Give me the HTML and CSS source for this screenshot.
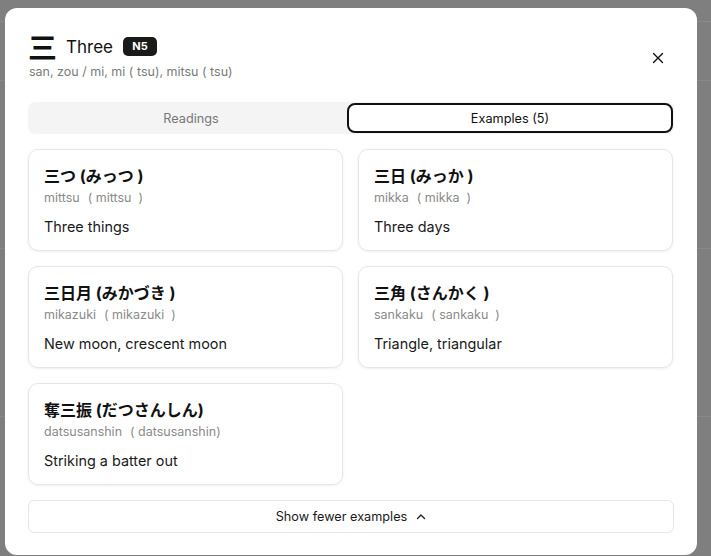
FILE: index.html
```html
<!DOCTYPE html>
<html lang="en">
<head>
<meta charset="utf-8">
<title>Three</title>
<link rel="stylesheet" href="styles.css">
</head>
<body>
<div class="page">
  <div class="page-top"></div>
  <div class="page-row r1"></div>
  <div class="page-row r2"></div>
  <div class="page-row r3"></div>
</div>
<div class="overlay">
  <div class="modal">
    <div class="header">
      <div class="head-main">
        <div class="title-row">
          <span class="kanji">三</span>
          <span class="meaning">Three</span>
          <span class="badge">N5</span>
        </div>
        <div class="readings">san, zou / mi, mi ( tsu), mitsu ( tsu)</div>
      </div>
      <button class="close" aria-label="Close">
        <svg width="12" height="12" viewBox="0 0 12 12"><path d="M1.5 1.5 L10.5 10.5 M10.5 1.5 L1.5 10.5" stroke="#111" stroke-width="1.4" stroke-linecap="round" fill="none"/></svg>
      </button>
    </div>
    <div class="tabs">
      <div class="tab">Readings</div>
      <div class="tab active">Examples (5)</div>
    </div>
    <div class="cards">
      <div class="card">
        <div class="c-title">三つ (みっつ )</div>
        <div class="c-read">mittsu<span class="paren">( mittsu<span class="gap">)</span></span></div>
        <div class="c-mean">Three things</div>
      </div>
      <div class="card">
        <div class="c-title">三日 (みっか )</div>
        <div class="c-read">mikka<span class="paren">( mikka<span class="gap">)</span></span></div>
        <div class="c-mean">Three days</div>
      </div>
      <div class="card">
        <div class="c-title">三日月 (みかづき )</div>
        <div class="c-read">mikazuki<span class="paren">( mikazuki<span class="gap">)</span></span></div>
        <div class="c-mean">New moon, crescent moon</div>
      </div>
      <div class="card">
        <div class="c-title">三角 (さんかく )</div>
        <div class="c-read">sankaku<span class="paren">( sankaku<span class="gap">)</span></span></div>
        <div class="c-mean">Triangle, triangular</div>
      </div>
      <div class="card">
        <div class="c-title">奪三振 (だつさんしん)</div>
        <div class="c-read">datsusanshin<span class="paren">( datsusanshin)</span></div>
        <div class="c-mean">Striking a batter out</div>
      </div>
    </div>
    <button class="more">Show fewer examples
      <svg width="10" height="10" viewBox="0 0 10 10"><path d="M1.5 6.5 L5 3 L8.5 6.5" stroke="#222" stroke-width="1.4" fill="none" stroke-linecap="round" stroke-linejoin="round"/></svg>
    </button>
  </div>
</div>
</body>
</html>
```
FILE: styles.css
```css
html, body {
  margin: 0;
  padding: 0;
}
body {
  background: #7f7f7f;
  font-family: Inter, "Noto Sans CJK JP", sans-serif;
  width: 711px;
  height: 556px;
  overflow: hidden;
}
.page {
  display: flex;
  flex-direction: column;
}
.page-top {
  height: 21px;
  border-bottom: 1px solid #8a8a8a;
}
.page-row {
  border-bottom: 1px solid #888;
}
.r1 { height: 58px; }
.r2 { height: 167px; }
.r3 { height: 167px; }

.overlay {
  position: fixed;
  inset: 0;
}
.modal {
  position: absolute;
  left: 5px;
  top: 8px;
  width: 692px;
  height: 547px;
  box-sizing: border-box;
  background: #fff;
  border-radius: 12px;
  padding: 22px 23px 0 23px;
  display: flex;
  flex-direction: column;
}
.header {
  display: flex;
  align-items: center;
  justify-content: space-between;
}
.title-row {
  display: flex;
  align-items: center;
  height: 30px;
}
.kanji {
  font-family: "Noto Sans CJK JP", sans-serif;
  font-size: 29px;
  line-height: 30px;
  color: #111;
  font-weight: 700;
  margin-top: 1px;
}
.meaning {
  font-size: 17px;
  color: #111;
  margin-left: 9px;
  padding-top: 3px;
}
.badge {
  margin-left: 10px;
  background: #1a1a1a;
  color: #fff;
  font-size: 11px;
  font-weight: 700;
  height: 19px;
  line-height: 19px;
  width: 34px;
  text-align: center;
  border-radius: 5px;
  margin-top: 2px;
}
.readings {
  margin-top: 3px;
  font-size: 12.5px;
  color: #7a7a7a;
  line-height: 18px;
  padding-left: 1px;
}
.close {
  width: 28px;
  height: 28px;
  border: none;
  background: transparent;
  padding: 0;
  margin-right: 2px;
  margin-top: 4px;
  display: flex;
  align-items: center;
  justify-content: center;
}
.tabs {
  margin-top: 21px;
  background: #f4f4f4;
  border-radius: 7px;
  padding: 1px;
  display: flex;
  height: 32px;
  box-sizing: border-box;
}
.tab {
  display: flex;
  align-items: center;
  justify-content: center;
  font-size: 12.7px;
  color: #777;
}
.tab:first-child {
  flex: 1;
  padding-left: 6px;
}
.tab.active {
  width: 326px;
  box-sizing: border-box;
  background: #fff;
  border: 2px solid #111;
  border-radius: 8px;
  color: #111;
}
.cards {
  margin-top: 15px;
  display: grid;
  grid-template-columns: 315px 315px;
  column-gap: 15px;
  row-gap: 15px;
}
.card {
  border: 1px solid #e6e6e6;
  border-radius: 10px;
  box-shadow: 0 1px 3px rgba(0, 0, 0, 0.07);
  padding: 14px 15px 14px 15px;
  height: 102px;
  box-sizing: border-box;
}
.c-title {
  font-size: 16px;
  font-weight: 700;
  line-height: 24px;
  color: #111;
}
.c-read {
  font-size: 12.5px;
  line-height: 20px;
  color: #8a8a8a;
}
.paren {
  margin-left: 8px;
}
.gap {
  margin-left: 7px;
}
.c-mean {
  margin-top: 8px;
  font-size: 14.4px;
  line-height: 22px;
  color: #1a1a1a;
}
.more {
  margin-top: 15px;
  height: 33px;
  width: 100%;
  box-sizing: border-box;
  border: 1px solid #e6e6e6;
  border-radius: 6px;
  background: #fff;
  font-family: Inter, sans-serif;
  font-size: 12.7px;
  color: #1a1a1a;
  display: flex;
  align-items: center;
  justify-content: center;
  gap: 9px;
  padding: 0;
}
```
